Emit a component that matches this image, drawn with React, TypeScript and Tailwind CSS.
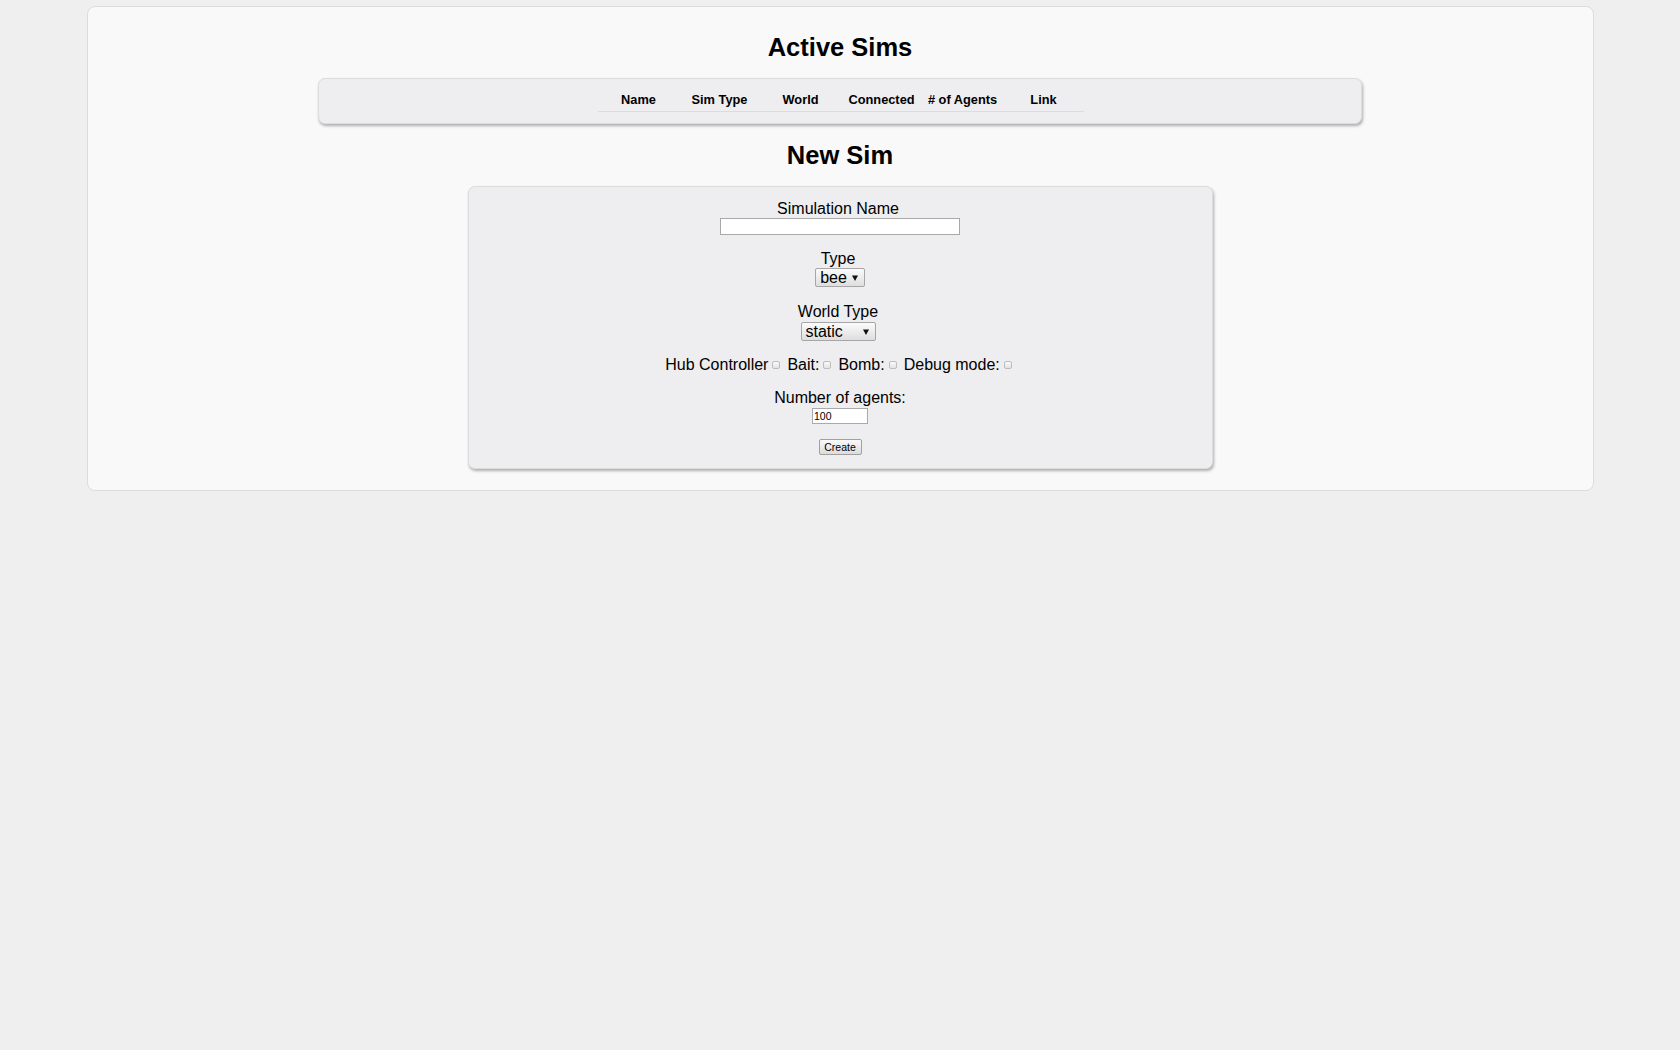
import React from 'react';

const columns = ['Name', 'Sim Type', 'World', 'Connected', '# of Agents', 'Link'];

function Arrow() {
  return (
    <svg className="w-[6px] h-[6px] shrink-0" viewBox="0 0 6 6">
      <path d="M0 0.5h6L3 6z" fill="#111" />
    </svg>
  );
}

function FakeSelect({ value, wide }: { value: string; wide?: boolean }) {
  return (
    <div
      className={`flex items-center h-[19px] border border-[#a6a6a6] rounded-[2px] bg-gradient-to-b from-[#fbfbfb] to-[#dedede] pl-[4px] pr-[6px] text-[16px] leading-[17px] ${
        wide ? 'w-[75px] mr-[4px] justify-between' : ''
      }`}
    >
      <span>{value}</span>
      <span className={wide ? '' : 'ml-[5px]'}>
        <Arrow />
      </span>
    </div>
  );
}

function Check() {
  return (
    <span className="ml-[4px] mr-[3px] w-[8px] h-[8px] rounded-[2px] border border-[#bdbdbd] bg-gradient-to-b from-[#fafafa] to-[#e3e3e3] shrink-0" />
  );
}

export default function App() {
  return (
    <div className="min-h-[1050px] bg-[#efefef] pt-[6px] font-['Liberation_Sans',Arial,sans-serif] text-black">
      <div className="mx-auto w-[1507px] h-[485px] rounded-[8px] border border-[#dcdcdc] bg-[#f9f9f9] flex flex-col items-center">
        {/* Active sims */}
        <h2 className="mt-[25px] text-[25.5px] leading-[30px] font-bold">Active Sims</h2>
        <div className="mt-[16px] w-[1044px] h-[46px] rounded-[7px] border border-[#dddddd] bg-[#eeedef] shadow-[1px_2px_3px_rgba(0,0,0,0.3)] flex justify-center pt-[13px]">
          <div className="ml-[2px] w-[486px] h-[20px] grid grid-cols-6 border-b border-[#dcdcdc]">
            {columns.map((c) => (
              <div key={c} className="text-center text-[12.8px] leading-[16px] font-bold">
                {c}
              </div>
            ))}
          </div>
        </div>

        {/* New sim form */}
        <h2 className="mt-[16px] text-[25.5px] leading-[30px] font-bold">New Sim</h2>
        <div className="mt-[16px] w-[745px] h-[283px] rounded-[7px] border border-[#dddddd] bg-[#eeedef] shadow-[1px_2px_3px_rgba(0,0,0,0.3)] flex flex-col items-center text-[16px] leading-[18px]">
          <label className="mt-[13px] mr-[4px] h-[18px]">Simulation Name</label>
          <input
            type="text"
            className="w-[240px] h-[17px] border border-[#a9a9a9] bg-white outline-none"
          />

          <label className="mt-[15px] mr-[4px] h-[18px]">Type</label>
          <FakeSelect value="bee" />

          <label className="mt-[16px] mr-[4px] h-[18px]">World Type</label>
          <div className="mt-[1px]">
            <FakeSelect value="static" wide />
          </div>

          <div className="mt-[15px] h-[18px] flex items-center">
            <span>Hub Controller</span>
            <Check />
            <span className="ml-[4px]">Bait:</span>
            <Check />
            <span className="ml-[4px]">Bomb:</span>
            <Check />
            <span className="ml-[4px]">Debug mode:</span>
            <Check />
          </div>

          <label className="mt-[15px] h-[18px]">Number of agents:</label>
          <input
            type="text"
            defaultValue="100"
            className="mt-[1px] w-[56px] h-[16px] border border-[#a9a9a9] bg-white px-[1px] text-[10.5px] leading-[14px] outline-none"
          />

          <button className="mt-[15px] w-[43px] h-[16px] border border-[#a0a0a0] rounded-[2px] bg-gradient-to-b from-[#fafafa] to-[#dcdcdc] text-[10.5px] leading-[14px]">
            Create
          </button>
        </div>
      </div>
    </div>
  );
}
